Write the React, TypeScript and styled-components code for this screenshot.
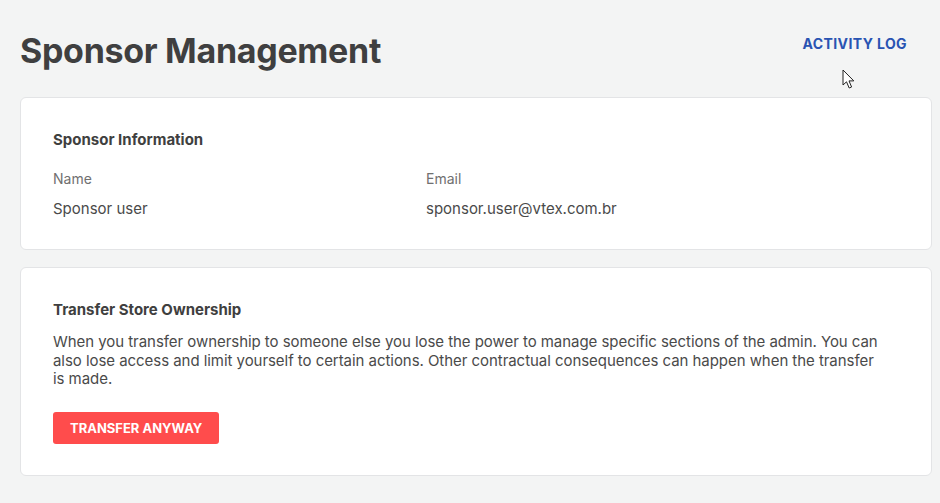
import React from 'react';
import styled, { createGlobalStyle } from 'styled-components';

const GlobalStyle = createGlobalStyle`
  html, body {
    margin: 0;
    padding: 0;
    background: #f3f4f4;
  }
  body {
    font-family: Inter, 'Noto Sans', sans-serif;
    color: #3f3f40;
  }
`;

export default function App() {
  return (
    <>
      <GlobalStyle />
      <Page>
        <Header>
          <Title>Sponsor Management</Title>
          <LinkButton>Activity Log</LinkButton>
        </Header>

        <Card>
          <CardTitle gap={21}>Sponsor Information</CardTitle>
          <Fields>
            <Field>
              <Label>Name</Label>
              <Value>Sponsor user</Value>
            </Field>
            <Field>
              <Label>Email</Label>
              <Value>sponsor.user@vtex.com.br</Value>
            </Field>
          </Fields>
        </Card>

        <Card>
          <CardTitle gap={14}>Transfer Store Ownership</CardTitle>
          <Text>
            When you transfer ownership to someone else you lose the power to manage specific
            sections of the admin. You can also lose access and limit yourself to certain actions.
            Other contractual consequences can happen when the transfer is made.
          </Text>
          <DangerButton>Transfer anyway</DangerButton>
        </Card>

        <Cursor width='14' height='21' viewBox='0 0 14 21'>
          <path
            d='M1 1 L1 16 L4.5 12.8 L7.2 19 L9.6 18 L7 11.9 L11.8 11.9 Z'
            fill='#fff'
            stroke='#222'
            strokeWidth='1'
            strokeLinejoin='round'
          />
        </Cursor>
      </Page>
    </>
  );
}

const Page = styled.div`
  position: relative;
  padding: 20px 8px 26px 20px;
  display: flex;
  flex-direction: column;
  gap: 17px;
`;

const Header = styled.div`
  display: flex;
  align-items: center;
  justify-content: space-between;
  height: 60px;
`;

const Title = styled.h1`
  margin: 0;
  font-size: 34px;
  font-weight: 700;
  letter-spacing: -0.3px;
  color: #3f3f40;
`;

const LinkButton = styled.button`
  border: none;
  background: none;
  padding: 0 25px 0 0;
  margin-top: -14px;
  font-family: inherit;
  font-size: 14px;
  font-weight: 700;
  letter-spacing: 0.4px;
  text-transform: uppercase;
  color: #2953b2;
  cursor: pointer;
`;

const Card = styled.section`
  background: #fff;
  border: 1px solid #e3e4e6;
  border-radius: 6px;
  padding: 32px 32px 31px;
  display: flex;
  flex-direction: column;
  align-items: flex-start;
`;

const CardTitle = styled.h2<{ gap: number }>`
  margin: 0 0 ${({ gap }) => gap}px;
  font-size: 15px;
  font-weight: 700;
  color: #3f3f40;
`;

const Fields = styled.div`
  display: grid;
  grid-template-columns: 373px 1fr;
  width: 100%;
`;

const Field = styled.div`
  display: flex;
  flex-direction: column;
  gap: 12px;
`;

const Label = styled.span`
  font-size: 14px;
  color: #707070;
`;

const Value = styled.span`
  font-size: 15px;
  color: #4a4a4a;
`;

const Text = styled.p`
  margin: 0 0 23px;
  max-width: 832px;
  font-size: 15px;
  line-height: 18.5px;
  letter-spacing: -0.05px;
  color: #4a4a4a;
`;

const DangerButton = styled.button`
  height: 32px;
  padding: 0 17px;
  border: none;
  border-radius: 3px;
  background: #ff4c4c;
  color: #fff;
  font-family: inherit;
  font-size: 13px;
  font-weight: 700;
  text-transform: uppercase;
  cursor: pointer;
`;

const Cursor = styled.svg`
  position: absolute;
  left: 842px;
  top: 69px;
`;
